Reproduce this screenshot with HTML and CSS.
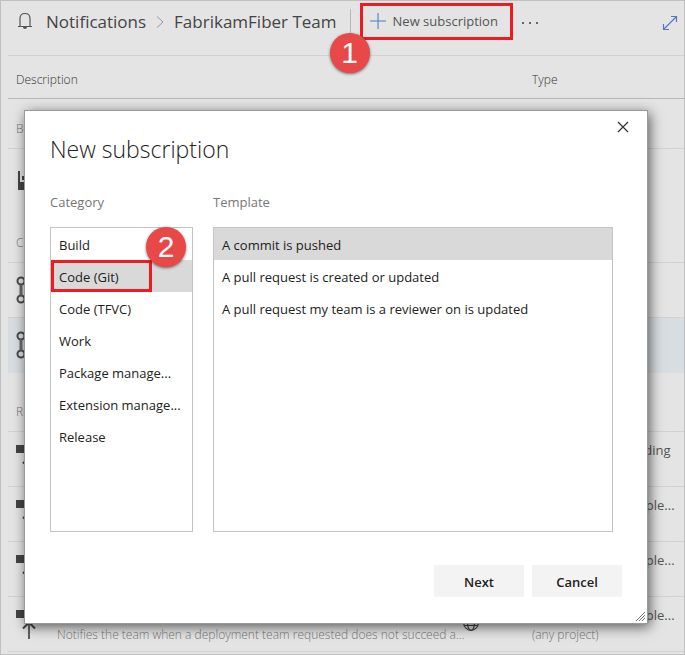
FILE: index.html
```html
<!DOCTYPE html>
<html lang="en">
<head>
<meta charset="utf-8">
<title>Notifications</title>
<link rel="stylesheet" href="styles.css">
</head>
<body>
<svg class="sprites" aria-hidden="true">
  <symbol id="build" viewBox="0 0 24 24">
    <path d="M2 2h2v19h-2zM4 13h14v8h-14zM6 7h4v4h-4z" fill="#444"/>
  </symbol>
  <symbol id="git" viewBox="0 0 24 32">
    <g fill="none" stroke="#4a4a4a" stroke-width="2"><circle cx="5" cy="7" r="3.5"/><circle cx="5" cy="25" r="3.5"/><circle cx="17" cy="7" r="3.5"/></g>
    <path d="M5 10.500v11" stroke="#6a6a6a" stroke-width="3"/>
  </symbol>
  <symbol id="release" viewBox="0 0 24 32">
    <path d="M0 2h8v8H0z" fill="#444"/>
    <path d="M7 20.500l6-6 6 6" fill="none" stroke="#444" stroke-width="2"/>
    <path d="M13 14.500v16.500" stroke="#606060" stroke-width="2"/>
  </symbol>
</svg>
<main class="page">
  <header class="hub">
    <svg class="bell" viewBox="0 0 16 18" aria-hidden="true"><path d="M1 14.500h14M3 14.500V6.500C3 3 5 1.500 8 1.500s5 1.500 5 5v8" fill="none" stroke="#555" stroke-width="1.200"/><path d="M6 15a2 2 0 0 0 4 0z" fill="#555"/></svg>
    <nav class="crumbs" aria-label="Breadcrumb">
      <a href="#">Notifications</a>
      <svg class="chevron" viewBox="0 0 8 14" aria-hidden="true"><path d="M1 1.500l6 5.500-6 5.500" fill="none" stroke="#999"/></svg>
      <a href="#">FabrikamFiber Team</a>
    </nav>
    <div class="callout-anchor">
      <button class="new" type="button"><svg class="plus" viewBox="0 0 16 16" aria-hidden="true"><path d="M8.500 1v15M1 8.500h15" stroke="#4a7fc4"/></svg>New subscription</button>
      <span class="badge badge-one">1</span>
    </div>
    <button class="more" type="button" aria-label="More actions"><svg viewBox="0 0 18 4" aria-hidden="true"><path d="M1 1h2v2H1zM8 1h2v2H8zM15 1h2v2h-2z" fill="#666"/></svg></button>
    <button class="expand" type="button" aria-label="Full screen"><svg viewBox="0 0 16 16" aria-hidden="true"><path d="M1.500 14.500l13-13M9 1.500h5.500V7M1.500 9v5.500H7" fill="none" stroke="#5577bd" stroke-width="1.200"/></svg></button>
  </header>
  <table class="subs">
    <colgroup><col class="col-icon"><col><col class="col-type"></colgroup>
    <thead><tr><th colspan="2">Description</th><th>Type</th></tr></thead>
    <tbody>
      <tr class="group first"><th colspan="3">Build</th></tr>
      <tr class="last"><td><svg class="small"><use href="#build"/></svg></td><td></td><td></td></tr>
    </tbody>
    <tbody>
      <tr class="group"><th colspan="3">Code</th></tr>
      <tr><td><svg><use href="#git"/></svg></td><td></td><td></td></tr>
      <tr class="selected last"><td><svg><use href="#git"/></svg></td><td></td><td></td></tr>
    </tbody>
    <tbody>
      <tr class="group"><th colspan="3">Release</th></tr>
      <tr><td><svg><use href="#release"/></svg></td><td></td><td><p class="kind">An approval is pending</p></td></tr>
      <tr><td><svg><use href="#release"/></svg></td><td></td><td><p class="kind">A deployment comple...</p></td></tr>
      <tr><td><svg><use href="#release"/></svg></td><td></td><td><p class="kind">A deployment comple...</p></td></tr>
      <tr><td><svg><use href="#release"/></svg></td>
        <td><div class="about"><div class="about-text"><p class="kind">Deployment fails</p><p class="note">Notifies the team when a deployment team requested does not succeed a...</p></div>
          <svg class="globe" viewBox="0 0 16 16" aria-hidden="true"><g fill="none" stroke="#444" stroke-width="1.200"><circle cx="8" cy="8" r="7.300"/><ellipse cx="8" cy="8" rx="3.500" ry="7.300"/><path d="M1.500 10.500h13M1.500 5.500h13"/></g></svg></div></td>
        <td><p class="kind">A deployment comple...</p><p class="note">(any project)</p></td></tr>
    </tbody>
  </table>

  <section class="dialog" role="dialog" aria-labelledby="dialog-title">
    <div class="titlebar">
      <h1 id="dialog-title">New subscription</h1>
      <button class="close" type="button" aria-label="Close"><svg viewBox="0 0 12 12" aria-hidden="true"><path d="M1 1l10 10M11 1L1 11" stroke="#333" stroke-width="1.200"/></svg></button>
    </div>
    <div class="pickers">
      <div class="picker">
        <h2 id="category">Category</h2>
        <ul class="list" aria-labelledby="category">
          <li><button type="button">Build</button></li>
          <li class="callout-anchor"><button class="chosen" type="button">Code (Git)</button><span class="outline"></span><span class="badge badge-two">2</span></li>
          <li><button type="button">Code (TFVC)</button></li>
          <li><button type="button">Work</button></li>
          <li><button type="button">Package manage...</button></li>
          <li><button type="button">Extension manage...</button></li>
          <li><button type="button">Release</button></li>
        </ul>
      </div>
      <div class="picker">
        <h2 id="template">Template</h2>
        <ul class="list" aria-labelledby="template">
          <li><button class="chosen" type="button">A commit is pushed</button></li>
          <li><button type="button">A pull request is created or updated</button></li>
          <li><button type="button">A pull request my team is a reviewer on is updated</button></li>
        </ul>
      </div>
    </div>
    <div class="actions">
      <button type="button">Next</button>
      <button type="button">Cancel</button>
    </div>
    <svg class="grip" viewBox="0 0 10 10" aria-hidden="true"><path d="M1 10l9-9M4 10l6-6M7 10l3-3" stroke="#777" stroke-width="1"/></svg>
  </section>
</main>
</body>
</html>
```
FILE: styles.css
```css
* { box-sizing: border-box; }
body { margin: 0; font: 13px/20px "Open Sans", "Noto Sans", sans-serif; color: #222; background: #e4e4e4; }
button { font: inherit; color: inherit; border: 0; background: none; padding: 0; }
h1, h2, p, ul { margin: 0; padding: 0; font-weight: 400; }
svg { display: block; }
.sprites { position: absolute; width: 0; height: 0; }

.page { position: relative; min-height: 100vh; border: 1px solid #c0c0c0; padding-left: 7px; overflow: hidden; }

.hub { display: flex; align-items: flex-start; height: 55px; border-bottom: 1px solid #d2d2d2; padding: 2px 6px 0 9px; }
.bell { width: 16px; height: 18px; margin: 9px 13px 0 0; }
.crumbs { display: flex; align-items: center; flex: none; gap: 10px; height: 37px; padding-right: 13px; }
.crumbs a { color: #444; font-size: 17px; text-decoration: none; }
.chevron { width: 8px; height: 14px; }
.callout-anchor { position: relative; }
.hub .callout-anchor { flex: none; padding-left: 10px; }
.hub .callout-anchor::before { content: ""; position: absolute; left: 0; top: 6px; height: 26px; border-left: 1px solid #b8b8b8; }
.new { display: flex; align-items: center; gap: 7px; width: 153px; height: 37px; border: 3px solid #ed1c24; padding: 0 0 2px 6px; color: #555; white-space: nowrap; }
.plus { width: 17px; height: 17px; flex: none; }
.more { margin: 18px 0 0 8px; }
.more svg { width: 18px; height: 4px; }
.expand { margin: 12px 0 0 auto; }
.expand svg { width: 16px; height: 16px; }

.badge { position: absolute; z-index: 1; width: 40px; height: 40px; border-radius: 50%; background: #e84848; color: #fff; font: 30px/40px "Liberation Sans", Arial, sans-serif; text-align: center; box-shadow: 0 1px 3px #0008; }
.badge-one { left: -20px; top: 30px; }
.badge-two { right: 6px; top: -33px; }

.subs { width: 100%; border-collapse: separate; border-spacing: 0; table-layout: fixed; color: #555; }
.col-icon { width: 49px; }
.col-type { width: 160px; }
.subs th { padding: 0 8px; text-align: left; font-weight: 300; font-size: 12px; color: #333; }
.subs thead th { height: 43px; padding-top: 6px; border-bottom: 1px solid #b8b8b8; }
.subs .group th { height: 59px; padding-top: 20px; border-bottom: 1px solid #d2d2d2; color: #777; }
.subs .first th { height: 50px; padding-top: 10px; }
.subs td { height: 55px; padding: 8px 0 0; vertical-align: top; border-bottom: 1px solid #d2d2d2; white-space: nowrap; }
.subs .last td { border-bottom: 0; }
.subs td:first-child, .subs td:last-child { padding-left: 8px; }
.subs td svg { width: 24px; height: 32px; margin-top: 3px; }
.subs td svg.small { height: 24px; margin-top: 12px; }
.selected td { background: #d8dde1; }
.note { font-size: 12px; font-weight: 300; color: #777; }
.about { display: flex; justify-content: space-between; padding-right: 45px; }
.about-text { min-width: 0; }
.subs td svg.globe { width: 16px; height: 16px; flex: none; margin-top: 10px; }

.dialog { position: absolute; left: 23px; right: 36px; top: 109px; padding: 0 34px 26px 25px; background: #fff; border: 1px solid #999; box-shadow: 2px 3px 12px #0009; }
.titlebar { display: flex; justify-content: space-between; align-items: flex-start; height: 79px; margin-right: -16px; }
h1 { margin-top: 20px; font-size: 23px; line-height: 36px; font-weight: 300; color: #222; }
.close { margin-top: 10px; }
.close svg { width: 12px; height: 12px; }
.pickers { display: grid; grid-template-columns: 143px 1fr; gap: 20px; }
h2 { height: 37px; padding-top: 2px; font-size: 13px; color: #777; }
.list { height: 305px; border: 1px solid #c4c4c4; list-style: none; }
.list button { display: block; width: 100%; height: 32px; padding: 2px 8px 0; text-align: left; white-space: nowrap; }
.list .chosen { background: #d9d9d9; }
.outline { position: absolute; left: 0; top: 0; width: 101px; height: 32px; border: 3px solid #ed1c24; }
.actions { display: flex; justify-content: flex-end; gap: 8px; margin: 33px -9px 0 0; }
.actions button { width: 90px; height: 32px; padding-top: 2px; background: #f3f3f3; font-weight: 600; }
.grip { position: absolute; right: 2px; bottom: 2px; width: 10px; height: 10px; }
```
